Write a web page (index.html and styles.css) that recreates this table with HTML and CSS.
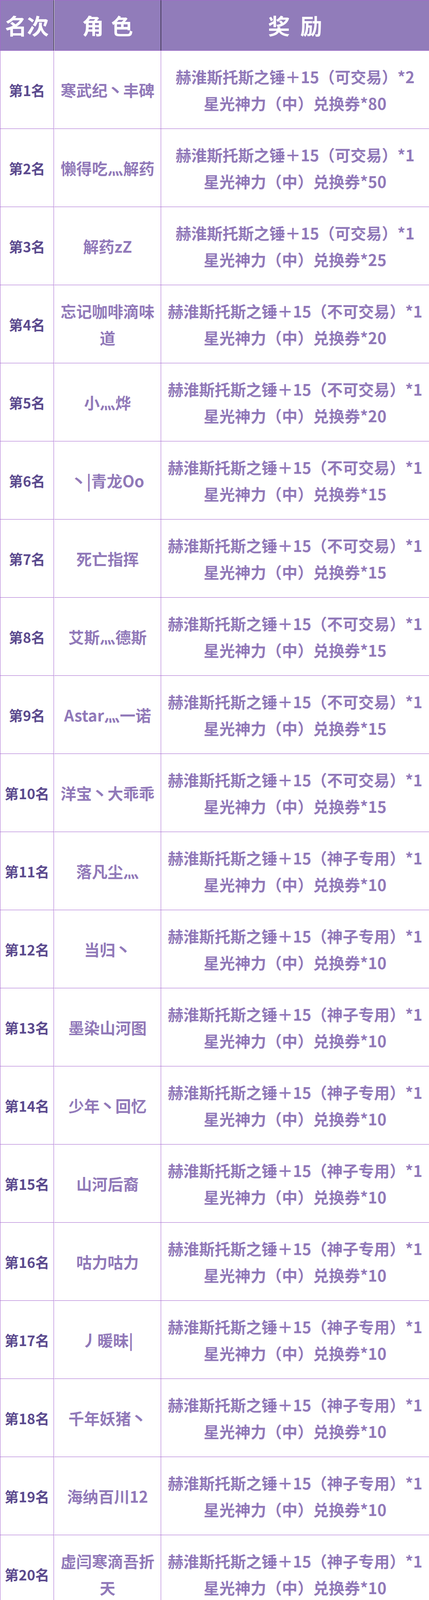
FILE: index.html
```html
<!DOCTYPE html>
<html lang="zh-CN">
<head>
<meta charset="utf-8">
<title>排名奖励</title>
<link rel="stylesheet" href="styles.css">
</head>
<body>
<div class="rank-table">
  <div class="cell head h-rank">名次</div>
  <div class="cell head h-name">角 色</div>
  <div class="cell head h-reward">奖 励</div>

  <div class="cell rank">第1名</div><div class="cell name">寒武纪丶丰碑</div><div class="cell reward">赫淮斯托斯之锤＋15（可交易）*2<br>星光神力（中）兑换券*80</div>
  <div class="cell rank">第2名</div><div class="cell name">懒得吃灬解药</div><div class="cell reward">赫淮斯托斯之锤＋15（可交易）*1<br>星光神力（中）兑换券*50</div>
  <div class="cell rank">第3名</div><div class="cell name">解药zZ</div><div class="cell reward">赫淮斯托斯之锤＋15（可交易）*1<br>星光神力（中）兑换券*25</div>
  <div class="cell rank">第4名</div><div class="cell name">忘记咖啡滴味道</div><div class="cell reward">赫淮斯托斯之锤＋15（不可交易）*1<br>星光神力（中）兑换券*20</div>
  <div class="cell rank">第5名</div><div class="cell name">小灬烨</div><div class="cell reward">赫淮斯托斯之锤＋15（不可交易）*1<br>星光神力（中）兑换券*20</div>
  <div class="cell rank">第6名</div><div class="cell name">丶|青龙Oo</div><div class="cell reward">赫淮斯托斯之锤＋15（不可交易）*1<br>星光神力（中）兑换券*15</div>
  <div class="cell rank">第7名</div><div class="cell name">死亡指挥</div><div class="cell reward">赫淮斯托斯之锤＋15（不可交易）*1<br>星光神力（中）兑换券*15</div>
  <div class="cell rank">第8名</div><div class="cell name">艾斯灬德斯</div><div class="cell reward">赫淮斯托斯之锤＋15（不可交易）*1<br>星光神力（中）兑换券*15</div>
  <div class="cell rank">第9名</div><div class="cell name">Astar灬一诺</div><div class="cell reward">赫淮斯托斯之锤＋15（不可交易）*1<br>星光神力（中）兑换券*15</div>
  <div class="cell rank">第10名</div><div class="cell name">洋宝丶大乖乖</div><div class="cell reward">赫淮斯托斯之锤＋15（不可交易）*1<br>星光神力（中）兑换券*15</div>
  <div class="cell rank">第11名</div><div class="cell name">落凡尘灬</div><div class="cell reward">赫淮斯托斯之锤＋15（神子专用）*1<br>星光神力（中）兑换券*10</div>
  <div class="cell rank">第12名</div><div class="cell name">当归丶</div><div class="cell reward">赫淮斯托斯之锤＋15（神子专用）*1<br>星光神力（中）兑换券*10</div>
  <div class="cell rank">第13名</div><div class="cell name">墨染山河图</div><div class="cell reward">赫淮斯托斯之锤＋15（神子专用）*1<br>星光神力（中）兑换券*10</div>
  <div class="cell rank">第14名</div><div class="cell name">少年丶回忆</div><div class="cell reward">赫淮斯托斯之锤＋15（神子专用）*1<br>星光神力（中）兑换券*10</div>
  <div class="cell rank">第15名</div><div class="cell name">山河后裔</div><div class="cell reward">赫淮斯托斯之锤＋15（神子专用）*1<br>星光神力（中）兑换券*10</div>
  <div class="cell rank">第16名</div><div class="cell name">咕力咕力</div><div class="cell reward">赫淮斯托斯之锤＋15（神子专用）*1<br>星光神力（中）兑换券*10</div>
  <div class="cell rank">第17名</div><div class="cell name">丿暖昧|</div><div class="cell reward">赫淮斯托斯之锤＋15（神子专用）*1<br>星光神力（中）兑换券*10</div>
  <div class="cell rank">第18名</div><div class="cell name">千年妖猪丶</div><div class="cell reward">赫淮斯托斯之锤＋15（神子专用）*1<br>星光神力（中）兑换券*10</div>
  <div class="cell rank">第19名</div><div class="cell name">海纳百川12</div><div class="cell reward">赫淮斯托斯之锤＋15（神子专用）*1<br>星光神力（中）兑换券*10</div>
  <div class="cell rank">第20名</div><div class="cell name">虚闫寒滴吾折天</div><div class="cell reward">赫淮斯托斯之锤＋15（神子专用）*1<br>星光神力（中）兑换券*10</div>
</div>
</body>
</html>
```
FILE: styles.css
```css
html, body {
  margin: 0;
  padding: 0;
  background: #ffffff;
}

body {
  font-family: "Noto Sans CJK SC", "Noto Sans", sans-serif;
  font-weight: 700;
}

.rank-table {
  box-sizing: border-box;
  width: 1097px;
  display: grid;
  grid-template-columns: 138px 273px 686px;
  grid-template-rows: 130px repeat(20, 200px);
  border-left: 1px solid #a466cf;
}

.cell {
  box-sizing: border-box;
  display: flex;
  align-items: center;
  justify-content: center;
  text-align: center;
  border-right: 1px solid #a466cf;
  border-bottom: 1px solid #a466cf;
}

.rank-table > .cell:nth-child(3n+1) {
  width: 137px;
}

.head {
  background: #917cba;
  color: #ffffff;
  font-size: 56px;
  line-height: 1;
  border-top: 1px solid #a466cf;
  padding-bottom: 2px;
}

.h-rank, .h-name {
  border-right-color: #000000;
}

.h-name { word-spacing: 6px; }
.h-reward { word-spacing: 14px; }

.rank {
  color: #5b4a8e;
  font-size: 36px;
  line-height: 68px;
}

.name {
  color: #9179b9;
  font-size: 40px;
  line-height: 68px;
  padding: 0 8px;
}

.reward {
  color: #9179b9;
  font-size: 40px;
  line-height: 68px;
  white-space: nowrap;
}
```
